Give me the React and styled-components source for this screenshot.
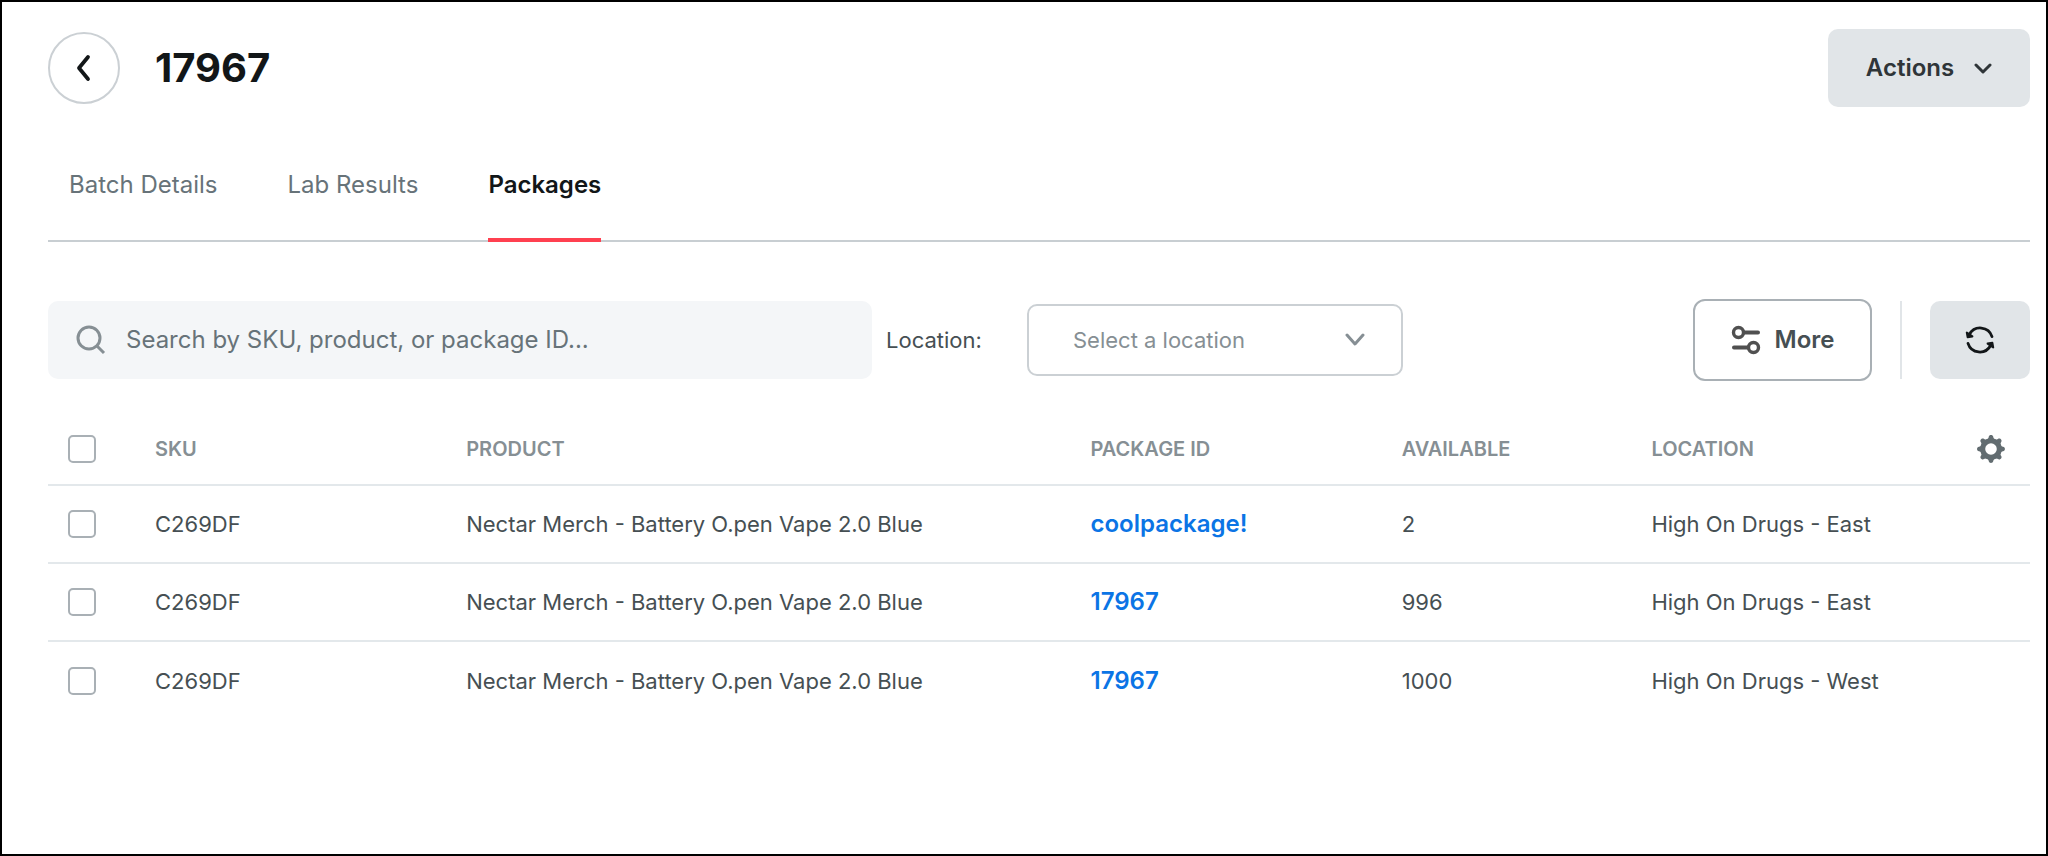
import React, { useState } from "react";
import styled, { createGlobalStyle } from "styled-components";

const GlobalStyle = createGlobalStyle`
  * {
    box-sizing: border-box;
  }
  body {
    margin: 0;
    background: #ffffff;
    color: #464f53;
    font-family: Inter, "Liberation Sans", sans-serif;
    font-size: 22px;
    line-height: 32px;
  }
  button,
  input,
  select {
    font: inherit;
    color: inherit;
  }
`;

const Page = styled.main`
  min-height: 100vh;
  padding: 27px 16px 40px 46px;
  border: 2px solid #000000;
`;
const Header = styled.header`
  display: flex;
  align-items: center;
  gap: 35px;
`;
const BackButton = styled.button`
  display: flex;
  align-items: center;
  justify-content: center;
  width: 72px;
  height: 72px;
  padding: 0;
  border: 2px solid #cbd0d4;
  border-radius: 50%;
  background: none;
  color: #121618;
  cursor: pointer;
`;
const Title = styled.h1`
  flex: 1;
  margin: 0;
  color: #121618;
  font-size: 40px;
  font-weight: 700;
  line-height: 48px;
`;
const GreyButton = styled.button`
  display: flex;
  align-items: center;
  justify-content: center;
  gap: 20px;
  width: ${({ $width }) => $width};
  height: 78px;
  padding: 0;
  border: 0;
  border-radius: 10px;
  background: #e1e5e8;
  color: #2f3538;
  font-size: 24px;
  font-weight: 600;
  cursor: pointer;
`;
const Tabs = styled.nav`
  display: flex;
  gap: 70px;
  margin: 38px 0 57px;
  padding-left: 21px;
  border-bottom: 2px solid #c8ced2;
  font-size: 24px;
`;
const Tab = styled.a`
  margin-bottom: -2px;
  padding: 24px 0 37px;
  border-bottom: 4px solid ${({ $active }) => ($active ? "#ff4050" : "transparent")};
  color: ${({ $active }) => ($active ? "#121618" : "#677379")};
  font-weight: ${({ $active }) => ($active ? 600 : 400)};
  text-decoration: none;
`;
const Toolbar = styled.div`
  display: flex;
  align-items: center;
  margin-bottom: 32px;
`;
const SearchBox = styled.label`
  display: flex;
  align-items: center;
  gap: 20px;
  width: 824px;
  height: 78px;
  padding: 0 28px;
  border-radius: 10px;
  background: #f4f6f8;
  color: #868f94;
  font-size: 24px;
  input {
    flex: 1;
    min-width: 0;
    padding: 0;
    border: 0;
    outline: 0;
    background: none;
    color: #464f53;
  }
  input::placeholder {
    color: #677379;
    opacity: 1;
  }
`;
const LocationLabel = styled.label`
  width: 155px;
  padding-left: 14px;
`;
const SelectBox = styled.div`
  position: relative;
  width: 376px;
  color: #868f94;
  select {
    width: 100%;
    height: 72px;
    padding: 0 60px 0 44px;
    border: 2px solid #cbd0d4;
    border-radius: 10px;
    appearance: none;
    background: #ffffff;
  }
  svg {
    position: absolute;
    top: 29px;
    right: 38px;
    pointer-events: none;
  }
`;
const ToolbarRight = styled.div`
  display: flex;
  align-items: center;
  gap: 28px;
  margin-left: auto;
`;
const MoreButton = styled.button`
  display: flex;
  align-items: center;
  justify-content: center;
  gap: 14px;
  width: 179px;
  height: 82px;
  padding: 0;
  border: 2px solid #a9b0b5;
  border-radius: 12px;
  background: none;
  font-size: 24px;
  font-weight: 600;
  cursor: pointer;
`;
const Divider = styled.span`
  width: 2px;
  height: 78px;
  background: #e1e5e8;
`;
const Table = styled.table`
  width: 100%;
  border-collapse: collapse;
  table-layout: fixed;
  th,
  td {
    height: 78px;
    padding: 0;
    text-align: left;
  }
  th {
    height: 72px;
    color: #868f94;
    font-size: 20px;
    font-weight: 600;
    text-transform: uppercase;
  }
  thead tr,
  tbody tr:not(:last-child) {
    border-bottom: 2px solid #e3e8eb;
  }
  a {
    color: #0b74e5;
    font-size: 24px;
    font-weight: 600;
    text-decoration: none;
  }
`;
const Col = styled.col`
  width: ${({ $width }) => $width};
`;
const Checkbox = styled.input`
  display: block;
  width: 28px;
  height: 28px;
  margin: 0 0 0 20px;
  border: 2px solid #a9b0b5;
  border-radius: 5px;
  appearance: none;
  background: #ffffff;
  &:checked {
    background: #0b74e5;
  }
`;
const GearButton = styled.button`
  display: block;
  margin: 0 24px 0 auto;
  padding: 0;
  border: 0;
  background: none;
  color: #626c70;
  cursor: pointer;
  svg {
    display: block;
  }
`;

const Chevron = ({ width, height, stroke }) => (
  <svg width={width} height={height} viewBox={`0 0 ${width} ${height}`} fill="none">
    <path
      d={`M2 2L${width / 2} ${height - 2}L${width - 2} 2`}
      stroke="currentColor"
      strokeWidth={stroke}
      strokeLinecap="round"
      strokeLinejoin="round"
    />
  </svg>
);
const BackIcon = () => (
  <svg width="16" height="28" viewBox="0 0 16 28" fill="none">
    <path
      d="M12 3L3 14L12 25"
      stroke="currentColor"
      strokeWidth="3.8"
      strokeLinecap="round"
      strokeLinejoin="round"
    />
  </svg>
);
const SearchIcon = () => (
  <svg width="30" height="30" viewBox="0 0 30 30" fill="none">
    <circle cx="13" cy="13" r="11" stroke="currentColor" strokeWidth="3" />
    <path d="M21 21L28 28" stroke="currentColor" strokeWidth="3" />
  </svg>
);
const SlidersIcon = () => (
  <svg width="30" height="30" viewBox="0 0 30 30" fill="none" stroke="#505050">
    <circle cx="7.5" cy="7.5" r="5" strokeWidth="3.4" />
    <circle cx="22.5" cy="22.5" r="5" strokeWidth="3.4" />
    <path d="M13 7.5H27M3 22.5H17" strokeWidth="4" strokeLinecap="round" />
  </svg>
);
const RefreshIcon = () => (
  <svg width="30" height="30" viewBox="0 0 30 30" fill="none" stroke="#121618">
    <path
      d="M4.4 9.5A12.3 12.3 0 0 1 27 11.6M25.6 20.5A12.3 12.3 0 0 1 3 18.4"
      strokeWidth="2.8"
      strokeLinecap="round"
    />
    <path
      d="M1.8 7.6L2.6 12.2L7.4 11.4ZM28.2 22.4L27.4 17.8L22.6 18.6Z"
      fill="#121618"
      strokeWidth="2"
      strokeLinejoin="round"
    />
  </svg>
);
const GearIcon = () => (
  <svg width="30" height="30" viewBox="0 0 30 30">
    <circle cx="15" cy="15" r="8.3" fill="none" stroke="currentColor" strokeWidth="5" />
    {[0, 45, 90, 135, 180, 225, 270, 315].map((angle) => (
      <path
        key={angle}
        d="M10.4 6.2C12.2 5 12.5 4 12.7 3C13.1 .4 16.9 .4 17.3 3C17.5 4 17.8 5 19.6 6.2Z"
        fill="currentColor"
        transform={`rotate(${angle} 15 15)`}
      />
    ))}
  </svg>
);

const tabs = ["Batch Details", "Lab Results", "Packages"];
const columns = ["SKU", "Product", "Package ID", "Available", "Location"];
const widths = ["5.4%", "15.7%", "31.5%", "15.7%", "12.6%", "14.1%", "5%"];
const product = "Nectar Merch - Battery O.pen Vape 2.0 Blue";
const packages = [
  { sku: "C269DF", id: "coolpackage!", available: 2, location: "High On Drugs - East" },
  { sku: "C269DF", id: "17967", available: 996, location: "High On Drugs - East" },
  { sku: "C269DF", id: "17967", available: 1000, location: "High On Drugs - West" },
];

export default function App() {
  const [active, setActive] = useState("Packages");
  const [selected, setSelected] = useState([]);

  const toggle = (index) => {
    setSelected((prev) =>
      prev.includes(index) ? prev.filter((i) => i !== index) : [...prev, index]
    );
  };
  const toggleAll = () => {
    setSelected((prev) =>
      prev.length === packages.length ? [] : packages.map((_, index) => index)
    );
  };

  return (
    <>
      <GlobalStyle />
      <Page>
        <Header>
          <BackButton aria-label="Back">
            <BackIcon />
          </BackButton>
          <Title>17967</Title>
          <GreyButton $width="202px">
            Actions
            <Chevron width={18} height={11} stroke={3} />
          </GreyButton>
        </Header>
        <Tabs>
          {tabs.map((tab) => (
            <Tab key={tab} href="#" $active={tab === active} onClick={() => setActive(tab)}>
              {tab}
            </Tab>
          ))}
        </Tabs>
        <Toolbar>
          <SearchBox>
            <SearchIcon />
            <input
              type="text"
              aria-label="Search packages"
              placeholder="Search by SKU, product, or package ID..."
            />
          </SearchBox>
          <LocationLabel htmlFor="location">Location:</LocationLabel>
          <SelectBox>
            <select id="location" defaultValue="">
              <option value="">Select a location</option>
              <option>High On Drugs - East</option>
              <option>High On Drugs - West</option>
            </select>
            <Chevron width={20} height={13} stroke={3} />
          </SelectBox>
          <ToolbarRight>
            <MoreButton>
              <SlidersIcon />
              More
            </MoreButton>
            <Divider />
            <GreyButton $width="100px" aria-label="Refresh">
              <RefreshIcon />
            </GreyButton>
          </ToolbarRight>
        </Toolbar>
        <Table>
          <colgroup>
            {widths.map((width, index) => (
              <Col key={index} $width={width} />
            ))}
          </colgroup>
          <thead>
            <tr>
              <th>
                <Checkbox
                  type="checkbox"
                  aria-label="Select all packages"
                  checked={selected.length === packages.length}
                  onChange={toggleAll}
                />
              </th>
              {columns.map((column) => (
                <th key={column}>{column}</th>
              ))}
              <th>
                <GearButton aria-label="Table settings">
                  <GearIcon />
                </GearButton>
              </th>
            </tr>
          </thead>
          <tbody>
            {packages.map((item, index) => (
              <tr key={index}>
                <td>
                  <Checkbox
                    type="checkbox"
                    aria-label={`Select package ${item.id}`}
                    checked={selected.includes(index)}
                    onChange={() => toggle(index)}
                  />
                </td>
                <td>{item.sku}</td>
                <td>{product}</td>
                <td>
                  <a href="#">{item.id}</a>
                </td>
                <td>{item.available}</td>
                <td>{item.location}</td>
                <td></td>
              </tr>
            ))}
          </tbody>
        </Table>
      </Page>
    </>
  );
}
